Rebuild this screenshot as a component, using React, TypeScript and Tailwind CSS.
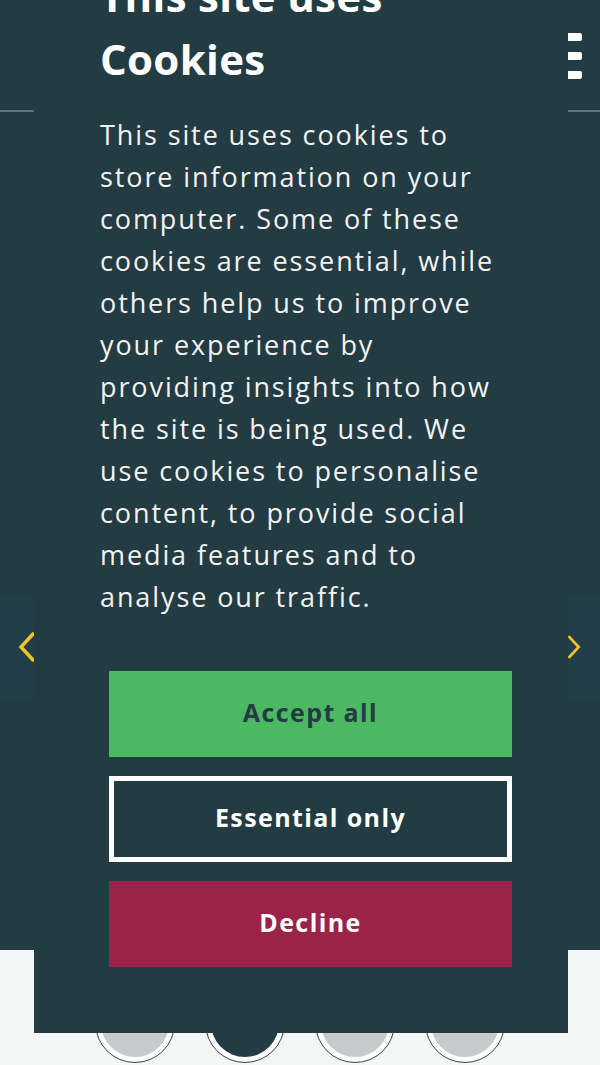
const BODY_LINES = [
  'This site uses cookies to',
  'store information on your',
  'computer. Some of these',
  'cookies are essential, while',
  'others help us to improve',
  'your experience by',
  'providing insights into how',
  'the site is being used. We',
  'use cookies to personalise',
  'content, to provide social',
  'media features and to',
  'analyse our traffic.',
];

function Chevron({ dir }: { dir: 'left' | 'right' }) {
  return (
    <svg width="18" height="32" viewBox="0 0 18 32" fill="none" stroke="#f2c52b" strokeWidth="3.5" strokeLinecap="butt" strokeLinejoin="miter">
      {dir === 'left' ? <polyline points="16,2 3,16 16,30" /> : <polyline points="2,2 15,16 2,30" />}
    </svg>
  );
}

function Dot({ active }: { active?: boolean }) {
  return (
    <div className="h-[80px] w-[80px] rounded-full border border-[#2f484e] bg-white p-[5px]">
      <div className={active ? 'h-full w-full rounded-full bg-[#233b42]' : 'h-full w-full rounded-full bg-[#c5cbcb]'} />
    </div>
  );
}

export default function App() {
  return (
    <div className="relative h-[1065px] w-[600px] overflow-hidden bg-[#f4f5f5] font-['Open_Sans',sans-serif]">
      {/* page behind the dialog */}
      <div className="relative h-[950px] bg-[#233b42]">
        <header className="flex h-[112px] items-start justify-end border-b-2 border-[#5f7378] pr-[18px] pt-[33px]">
          <div className="flex flex-col gap-[11px]">
            <span className="block h-[8px] w-[28px] rounded-[2px] bg-white" />
            <span className="block h-[8px] w-[28px] rounded-[2px] bg-white" />
            <span className="block h-[8px] w-[28px] rounded-[2px] bg-white" />
          </div>
        </header>
        <button className="absolute left-0 top-[594px] flex h-[106px] w-[38px] items-center justify-start bg-[#223f48] pl-[18px]">
          <Chevron dir="left" />
        </button>
        <button className="absolute right-0 top-[594px] flex h-[106px] w-[33px] items-center justify-end bg-[#223f48] pr-[19px]">
          <Chevron dir="right" />
        </button>
      </div>
      <div className="flex justify-center gap-[30px] pt-[33px]">
        <Dot />
        <Dot active />
        <Dot />
        <Dot />
      </div>

      {/* cookie dialog */}
      <div className="absolute bottom-[32px] left-[34px] w-[534px] bg-[#233b42] px-[66px] pb-[66px] text-[#f3f3f3]">
        <h2 className="text-[42px] font-bold leading-[63px] tracking-[0.3px] text-white">
          This site uses
          <br />
          Cookies
        </h2>
        <p className="mt-[24px] text-[27px] leading-[42px] tracking-[1.9px]">
          {BODY_LINES.map((l) => (
            <span key={l} className="block whitespace-nowrap">
              {l}
            </span>
          ))}
        </p>
        <div className="ml-[9px] mt-[53px] flex w-[403px] flex-col gap-[19px]">
          <button className="h-[86px] bg-[#4cb862] pb-[2px] text-[25px] font-bold tracking-[1.4px] text-[#233b42]">
            Accept all
          </button>
          <button className="h-[86px] border-[5px] border-white pb-[2px] text-[25px] font-bold tracking-[1.4px] text-white">
            Essential only
          </button>
          <button className="h-[86px] bg-[#9b2348] pb-[2px] text-[25px] font-bold tracking-[1.4px] text-white">
            Decline
          </button>
        </div>
      </div>
    </div>
  );
}
